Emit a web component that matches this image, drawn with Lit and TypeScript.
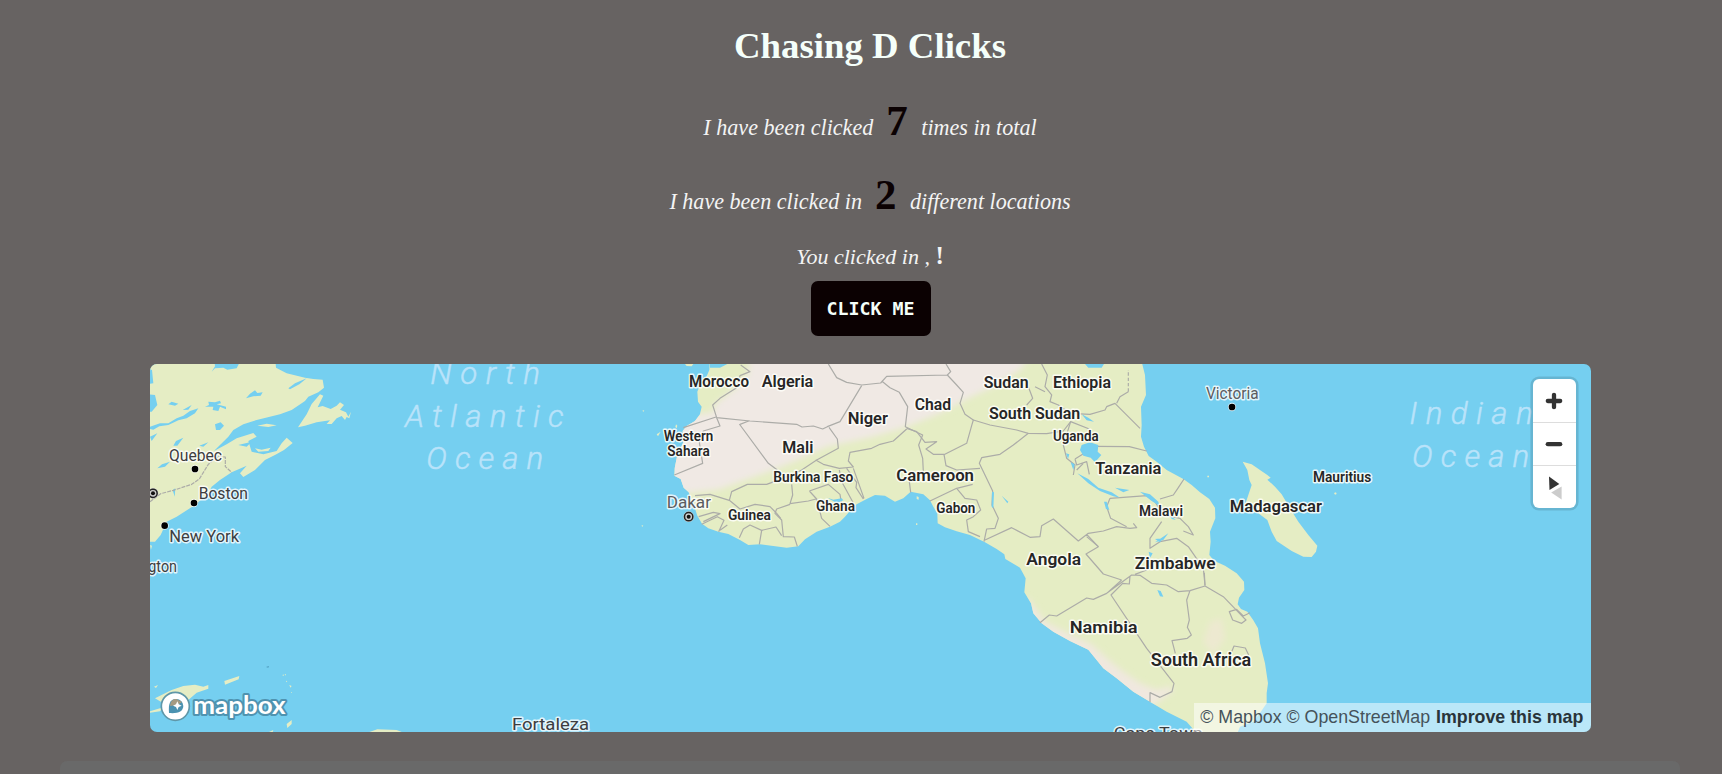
import { LitElement, html, svg, css } from "lit";
import { customElement, state } from "lit/decorators.js";

// [text, left, baseline, width, font size, kind]
type Label = [string, number, number, number, number, string];
type Sheet = { x: number; y: number; labels: Label[] };

// Every sheet is drawn at three units per pixel from its own origin.
const SHEETS: Sheet[] = [
  { x: 140, y: 355, labels: [
    ["Quebec", 87, 318, 159, 50, "city"],
    ["Boston", 176, 431, 148, 50, "city"],
    ["New York", 88, 560, 209, 50, "city"],
    ["gton", 25, 650, 86, 50, "city"],
  ]},
  { x: 140, y: 570, labels: [["Fortaleza", 1116, 480, 231, 51, "city"]] },
  { x: 390, y: 355, labels: [
    ["North", 121, 86, 329, 94, "sea"],
    ["Atlantic", 45, 215, 476, 94, "sea"],
    ["Ocean", 109, 343, 351, 94, "sea"],
  ]},
  { x: 1390, y: 355, labels: [
    ["Indian", 58, 208, 370, 94, "sea"],
    ["Ocean", 66, 337, 352, 94, "sea"],
  ]},
  { x: 640, y: 355, labels: [
    ["Morocco", 147, 96, 180, 49, "land"],
    ["Algeria", 365, 96, 155, 49, "land"],
    ["Niger", 623, 206, 121, 49, "land"],
    ["Chad", 824, 164, 109, 49, "land"],
    ["Mali", 427, 294, 93, 49, "land"],
    ["Western", 71, 257, 149, 42, "land"],
    ["Sahara", 82, 303, 127, 42, "land"],
    ["Burkina Faso", 400, 381, 240, 44, "land"],
    ["Dakar", 80, 458, 133, 51, "capital"],
    ["Guinea", 264, 495, 129, 44, "land"],
    ["Ghana", 528, 468, 117, 44, "land"],
    ["Cameroon", 769, 377, 233, 51, "land"],
    ["Gabon", 889, 474, 117, 44, "land"],
  ]},
  { x: 920, y: 355, labels: [
    ["Sudan", 191, 99, 135, 49, "land"],
    ["Ethiopia", 399, 99, 174, 49, "land"],
    ["South Sudan", 207, 191, 274, 49, "land"],
    ["Uganda", 399, 258, 137, 44, "land"],
    ["Tanzania", 526, 356, 198, 51, "land"],
    ["Malawi", 657, 484, 132, 44, "land"],
  ]},
  { x: 960, y: 540, labels: [
    ["Angola", 199, 74, 164, 52, "land"],
    ["Zimbabwe", 524, 87, 243, 52, "land"],
    ["Namibia", 329, 280, 204, 52, "land"],
    ["South Africa", 572, 378, 302, 54, "land"],
    ["Cape Town", 461, 597, 267, 50, "city"],
  ]},
  { x: 1180, y: 355, labels: [
    ["Victoria", 78, 133, 158, 51, "capital"],
    ["Mauritius", 399, 382, 175, 42, "land"],
    ["Madagascar", 149, 472, 277, 52, "land"],
  ]},
];

const AFRICA =
  "M210 0L208 45 198 68 182 85 172 110 174 140 185 155 180 178 165 198 140 213 128 228 130 262 112 300 104 340 103 362 122 372 131 398 146 412 152 428 140 440 163 455 172 482 186 506 205 520 235 530 265 537 300 555 325 570 360 568 400 573 440 578 475 574 495 553 530 530 570 515 600 500 615 485 635 462 650 448 680 432 705 420 735 422 765 440 790 430 812 410 850 418 870 436 880 455 892 476 893 505 915 517 950 529 990 540 1035 562 1070 582 1093 598 1096 612 1140 638 1157 670 1153 712 1173 745 1180 775 1205 805 1240 830 1290 858 1345 884 1362 905 1390 940 1430 970 1480 1010 1530 1040 1580 1070 1640 1100 1675 1140 1790 1140 1800 1115 1840 1100 1862 1071 1880 1045 1880 1015 1884 985 1875 925 1860 865 1854 820 1840 796 1822 770 1803 762 1793 748 1797 728 1813 705 1812 680 1790 655 1755 632 1722 617 1708 600 1712 560 1710 530 1726 490 1725 458 1708 432 1680 412 1655 390 1630 372 1580 345 1550 320 1526 303 1512 275 1503 245 1505 210 1503 155 1518 120 1515 60 1500 0Z";

const SAHARA =
  "M328 -20L325 55 295 92 222 150 222 172 80 190 60 410 140 415 235 404 330 370 400 345 480 312 560 275 700 245 800 215 900 175 985 130 1060 95 1140 45 1190 -20Z";

const NAMIB =
  "M1165 730L1190 765 1215 800 1290 838 1355 868 1400 910 1450 950 1500 985 1550 1005 1590 995 1602 1005 1570 1030 1525 1060 1300 960 1100 760Z";

const BORDERS = [
  "M302 30L330 50 300 62 290 98 240 130 218 150 230 188 330 198 470 208 486 216 520 213 548 222 562 215 600 200 665 92",
  "M230 188L240 213 190 228 178 262 188 325 103 360",
  "M130 218L228 186M300 208L326 198M298 207L385 325 412 345",
  "M565 27L590 68 620 82 665 90 722 84 740 64 922 60M725 78L750 98 778 112 803 155 796 215 848 240 836 270 848 310 850 350M918 27L932 50 922 60 950 90 970 112 960 145 975 178 1000 195",
  "M567 217L592 252 595 280 530 315 485 345 450 362 380 388 322 388 275 410 268 436 300 462 345 448 390 455 410 475 422 490",
  "M527 315L550 328 598 340 640 336 625 318 630 292 695 280 720 268 760 258 800 222M640 340L672 430M620 340L650 382 648 398 670 432M598 345L606 382 642 448M508 408L565 388 600 418 605 450 618 465M508 408L530 432 545 490 570 514M455 388L458 420 450 446 505 438 528 432M450 448L410 462 405 475 425 495 430 545 463 546 472 574M165 422L210 418 268 436M176 485L220 472 240 476 190 500M185 508L232 485 252 496 236 530M262 510L240 526M298 548L310 522 330 510 365 526 408 516 425 542M365 526L358 568",
  "M800 220L830 230 855 262 890 260 858 282 880 298 912 298 918 332 950 345 1020 340M910 300L980 265 995 212 1000 195 1050 210 1130 225 1165 235 1220 236 1270 228 1292 200 1348 222",
  "M1165 235L1120 270 1080 298 1025 308 1018 325 1058 408 1056 450 1075 490 1065 520 1040 522 1032 560M812 412L808 380M870 438L950 400 998 388M950 400L975 430 1010 435 1022 465 1000 485 980 495 985 530 1020 545",
  "M1035 555L1115 518 1170 547 1200 545 1205 512 1240 492 1315 558 1345 535 1390 528 1430 515 1470 520 1490 518 1480 505M1340 538L1375 575",
  "M1205 27L1222 60 1215 95 1235 120 1230 140 1255 150 1290 175 1350 178 1395 165 1400 155 1425 145 1500 220M1165 95L1178 130 1160 150M1430 145L1440 125 1465 110M1185 95L1215 110",
  "M1292 200L1270 270 1280 310 1305 330 1300 360M1305 312L1340 290 1365 274 1468 275 1520 288M1305 312L1310 330 1340 320 1348 358M1310 345L1330 325M1560 432L1600 420 1615 398 1632 372M1410 430L1400 455 1412 490 1460 515M1410 430L1520 422 1545 440 1570 480 1620 490 1645 515 1660 540 1630 528M1565 500L1530 550 1530 580 1560 560 1610 550 1645 575 1690 640 1695 690",
];

const SOUTH_BORDERS = [
  "M380 -10L415 20 378 42 430 102 485 120M485 120L440 160 400 178 380 174 290 228 268 225 240 248M440 160L515 105 540 106 575 130 620 135 655 155 690 152 735 138 733 98M525 103L560 90 575 70M510 108L508 132 488 130 453 165 560 325 642 430 636 455 600 472 570 458 570 486M690 152L680 180 688 240 682 262 694 285 682 295 636 302 646 340M735 138L790 170 850 232 858 240 845 250 818 240 808 215 830 208 850 228 870 218M815 335L822 318 856 324 866 345",
];

const CANADA =
  "M0 0L405 0 408 38 440 55 495 68 520 72 548 74 552 98 535 112 505 125 495 138 455 165 420 178 350 195 310 208 280 225 265 245 240 270 222 288 260 268 290 250 340 234 350 245 325 258 335 290 370 298 410 288 425 265 440 248 458 264 432 285 405 300 375 315 345 345 310 366 300 355 320 332 275 352 240 375 215 395 205 415 165 450 110 485 80 500 62 540 45 560 0 560Z";
const NEWFOUNDLAND =
  "M474 217L490 193 500 178 515 147 540 118 550 122 533 157 548 153 572 162 590 152 600 142 612 150 600 164 618 172 625 185 633 170 628 190 620 186 615 195 605 183 590 190 575 207 560 207 570 196 530 202 495 212Z";
const LAKES =
  "M222 0L310 0 290 40 262 44 250 38 225 40 215 50 225 34ZM0 30L36 45 40 85 0 90ZM20 118L45 120 52 150 35 170 0 170ZM318 130L330 116 345 106 352 114 368 112 362 122 340 124ZM85 148L95 140 115 146 105 152ZM128 165L155 150 145 164ZM195 155L207 150 205 140 225 142 240 137 243 145 230 148 258 155 258 163 240 155 235 168 218 165 220 155ZM30 215L60 205 85 205 110 190 130 182 150 168 175 160 165 175 140 190 115 196 85 210 58 214 40 224 30 222ZM30 245L52 235 35 258ZM225 208L242 202 252 212 240 225 228 225ZM100 272L108 258 130 248 112 272ZM178 272L205 262 190 275ZM52 340L66 328 90 320 75 335ZM98 405L106 400 104 425ZM445 100L465 85 500 70 478 88 450 103ZM295 270L335 260 320 275Z";

const AFRICAN_WATER =
  "M1335 27L1392 27 1385 38 1345 38ZM1325 270L1350 262 1375 270 1373 290 1384 300 1365 322 1352 308 1330 302 1320 285ZM1325 178L1345 188 1362 200 1340 196ZM1278 295L1288 298 1284 312ZM1292 322L1304 328 1300 345ZM1312 355L1345 372 1375 398 1415 412 1440 428 1420 424 1380 408 1345 385ZM1425 398L1468 405 1450 412ZM1500 410L1530 418 1555 440 1558 452 1535 438ZM1392 440L1400 440 1408 465 1398 462ZM1056 410L1062 412 1060 460 1055 455ZM1085 422L1105 440 1102 445ZM1545 562L1585 535 1570 555ZM1526 590L1538 595 1530 610ZM1545 552L1570 550 1560 562ZM1552 705L1562 708 1570 725 1560 724ZM562 428L580 434 605 430 610 436 590 444ZM1590 480L1608 495 1595 492Z";

@customElement("world-map")
class WorldMap extends LitElement {
  static styles = css`
    :host { display: block; position: relative; left: 0.3px; width: 1441px; height: 368.4px; overflow: hidden; border-radius: 7px; background: #75cff0; }
    .chart { display: block; width: 1441px; height: 369px; }
    text { font-family: Roboto, "Liberation Sans", sans-serif; paint-order: stroke; stroke-linejoin: round; }
    .land { font-weight: 600; fill: #262626; stroke: #fffffb; stroke-opacity: .85; stroke-width: 9; }
    .city { font-weight: 400; fill: #3d3d40; stroke: #fff; stroke-opacity: .8; stroke-width: 9; }
    .capital { font-weight: 400; fill: #5c5c60; stroke: #fff; stroke-opacity: .8; stroke-width: 9; }
    .sea { font-weight: 300; font-style: italic; fill: #b9e3fa; stroke: #b9e3fa; stroke-width: 1.5; }
    .ground { fill: #e5edc4; }
    .border { fill: none; stroke: #acaca8; stroke-width: 3.6; stroke-linejoin: round; }
    .water { fill: #75cff0; }
    .dot { fill: #000; stroke: #fff; stroke-opacity: .75; stroke-width: 5; paint-order: stroke; }
    .brand { font-family: Lato, sans-serif; font-weight: 700; fill: #fff; stroke: #4f93b0; stroke-width: 12; }
    .controls { position: absolute; top: 14.6px; right: 15.2px; width: 42.4px; display: flex; flex-direction: column; background: #fff; border-radius: 6px; box-shadow: 0 0 0 2.6px rgba(0,0,0,.12); }
    .control { appearance: none; border: 0; background: none; padding: 0; height: 43px; display: grid; place-items: center; }
    .control + .control { border-top: 1px solid #ddd; }
    .control svg { width: 42px; height: 42px; display: block; }
    .credits { position: absolute; right: 0; bottom: 0; height: 29.5px; width: 396.5px; box-sizing: border-box; padding: 0 7.5px 0 6px; background: rgba(255,255,255,.5); display: flex; align-items: center; justify-content: space-between; font: 17.8px/29px "Liberation Sans", Arial, sans-serif; color: #45525a; white-space: nowrap; }
    .improve { font-weight: 700; color: #29343a; }
  `;

  private city(x: number, y: number) {
    return svg`<circle class="dot" cx=${x} cy=${y} r="10"/>`;
  }
  private capital(x: number, y: number) {
    return svg`<circle cx=${x} cy=${y} r="16" fill="#ccc"/><circle cx=${x} cy=${y} r="12.5" fill="none" stroke="#222" stroke-width="4.5"/><circle cx=${x} cy=${y} r="6" fill="#111"/>`;
  }

  render() {
    return html`
      <svg class="chart" viewBox="150 364 1441 369" preserveAspectRatio="none">
        <defs>
          <filter id="soft" x="-10%" y="-10%" width="120%" height="120%"><feGaussianBlur stdDeviation="9"/></filter>
          <clipPath id="coast"><path d=${AFRICA}/></clipPath>
        </defs>
        <g transform="translate(140 355) scale(.33333)">
          <path class="ground" d=${CANADA}/><path class="water" d=${LAKES}/><path class="ground" d=${NEWFOUNDLAND}/>
          <path class="ground" d="M352 212L380 206 410 211 385 216ZM345 280L365 284 392 278 385 288 355 290ZM30 570L36 572 33 584Z"/>
          <path class="border" stroke-dasharray="12 3" d="M30 440L62 416 100 406 155 388 178 372 205 328 235 304 256 306 256 335 275 352"/>
          ${this.capital(39, 415)}${this.city(165, 342)}${this.city(162, 444)}${this.city(74, 512)}
        </g>
        <g transform="translate(140 570) scale(.33333)">
          <path class="ground" d="M45 385L95 360 130 348 165 344 190 350 205 345 205 356 170 368 145 390 70 400ZM253 333L298 318 296 328 255 344ZM30 424L70 412 60 424 30 428ZM440 462L455 450 455 462 442 474ZM42 350L54 345 48 354ZM385 487L400 480 398 487ZM685 487L712 478 770 480 788 487ZM427 316l3 -3 2 5zM434 312l4 1 -2 4zM438 332l4 2 -3 3zM448 345l7 3 -4 5zM453 366l3 0 0 4z"/>
          <path fill="#4d9abb" d="M378 291l9 -3 -2 5z"/>
        </g>
        <g transform="translate(640 355) scale(.33333)">
          <path class="ground" d=${AFRICA}/>
          <path class="ground" d="M135 27L160 27 155 34 140 33Z"/>
          <g clip-path="url(#coast)">
            <path class="water" d="M210 22L272 22 240 38 210 38Z"/>
            <path fill="#f0e9e4" filter="url(#soft)" d=${SAHARA}/>
            <path fill="#f0e8df" filter="url(#soft)" d=${NAMIB}/>
            <path fill="#ede9d0" filter="url(#soft)" d="M1710 800L1745 790 1755 850 1720 900 1690 860Z"/>
          </g>
          ${BORDERS.map((d) => svg`<path class="border" d=${d}/>`)}
          <path class="border" stroke-dasharray="10 6" d="M1465 110L1465 45"/>
          <path class="water" d=${AFRICAN_WATER}/>
          <path class="ground" d="M50 238L62 230 54 244ZM108 208l4 4 -2 8 -4 -4zM8 165l5 2 -4 4zM5 510l5 2 -4 4zM830 424l6 2 0 8 -6 -2zM828 505l4 0 0 5 -4 0z"/>
          ${this.capital(146, 485)}
        </g>
        <g transform="translate(960 540) scale(.33333)">
          ${SOUTH_BORDERS.map((d) => svg`<path class="border" d=${d}/>`)}
        </g>
        <g transform="translate(1180 355) scale(.33333)">
          <path class="ground" d="M188 320L215 328 240 345 262 360 272 368 262 374 285 395 305 418 330 460 355 500 385 540 412 572 408 590 395 606 370 605 335 588 290 558 275 530 262 495 235 475 195 450 205 420 215 390 208 375 202 345ZM462 414l6 -2 2 5 -5 2zM82 362l5 0 0 5 -5 0z"/>
          ${this.city(156, 156)}
        </g>
        ${SHEETS.map((s) => svg`<g transform="translate(${s.x} ${s.y}) scale(.33333)">${s.labels.map(
          ([t, x, y, w, size, kind]) => svg`<text class=${kind} x=${x} y=${y} font-size=${size} textLength=${w} lengthAdjust=${kind === "sea" ? "spacing" : "spacingAndGlyphs"}>${t}</text>`
        )}</g>`)}
        <g transform="translate(140 570) scale(.33333)">
          <circle cx="106" cy="409" r="42" fill="#fff" stroke="#5f97a8" stroke-width="5"/>
          <path d="M87 429C85 402 89 388 108 387A21 21 0 0 1 130 408C129 426 113 431 87 429Z" fill="#4b92b0"/>
          <path d="M90 408C92 391 99 387 109 387L126 396 112 405Z" fill="#a59b82"/>
          <path d="M112 394L116 403 125 407 116 411 112 420 108 411 99 407 108 403Z" fill="#fff"/>
          <text class="brand" x="160" y="431" font-size="77" textLength="277" lengthAdjust="spacingAndGlyphs">mapbox</text>
        </g>
      </svg>
      <div class="controls">
        <button class="control" aria-label="Zoom in"><svg viewBox="0 0 42 42"><path d="M14.8 22H27.2M21 15.8V28.2" stroke="#333" stroke-width="4.3" stroke-linecap="round"/></svg></button>
        <button class="control" aria-label="Zoom out"><svg viewBox="0 0 42 42"><path d="M14.8 21.2H27.2" stroke="#333" stroke-width="4.3" stroke-linecap="round"/></svg></button>
        <button class="control" aria-label="Reset bearing"><svg viewBox="0 0 42 42"><path d="M16 10.5L26.3 18 16.5 24Z" fill="#333"/><path d="M18.2 26.5L28.6 20.5V33.5Z" fill="#ccc"/></svg></button>
      </div>
      <div class="credits"><span>© Mapbox © OpenStreetMap</span><span class="improve">Improve this map</span></div>`;
  }
}

@customElement("app-root")
class AppRoot extends LitElement {
  static styles = css`
    :host { display: block; box-sizing: border-box; height: 774px; overflow: hidden; padding: 24.6px 42px 0 60px; background: #676362; font-family: "Liberation Serif", "Times New Roman", serif; color: #f4f4f4; }
    .page { display: flex; flex-direction: column; align-items: center; }
    .title { margin: 0 0 29.4px; font-size: 36.8px; line-height: 42px; color: #f5fffa; }
    .count { margin: 0 0 24px; height: 50px; display: flex; align-items: baseline; font-size: 22.1px; font-style: italic; line-height: 50px; }
    .number { font-size: 43px; font-style: normal; font-weight: 700; color: #0b0102; margin: 0 13.5px 0 13px; }
    .place { margin: -1.5px 0 8.5px; height: 30px; font-size: 22px; font-style: italic; line-height: 30px; }
    .mark { font-size: 25px; font-style: normal; line-height: 1; }
    .click { width: 120px; height: 55px; margin: 0 0 28px 1px; padding: 0; border: 0; border-radius: 7px; background: #0b0102; color: #f5fffa; font: 700 18.27px/55px "DejaVu Sans Mono", monospace; }
    .panel { align-self: stretch; height: 30px; margin-top: 29px; border-radius: 7px 7px 0 0; background: #696969; }
  `;

  @state() private total = 7;
  @state() private locations = 2;

  render() {
    return html`<main class="page">
      <h1 class="title">Chasing D Clicks</h1>
      <p class="count"><span>I have been clicked</span><b class="number">${this.total}</b><span>times in total</span></p>
      <p class="count"><span>I have been clicked in</span><b class="number">${this.locations}</b><span>different locations</span></p>
      <p class="place">You clicked in , <b class="mark">!</b></p>
      <button class="click" @click=${() => this.total++}>CLICK ME</button>
      <world-map></world-map>
      <section class="panel"></section>
    </main>`;
  }
}
